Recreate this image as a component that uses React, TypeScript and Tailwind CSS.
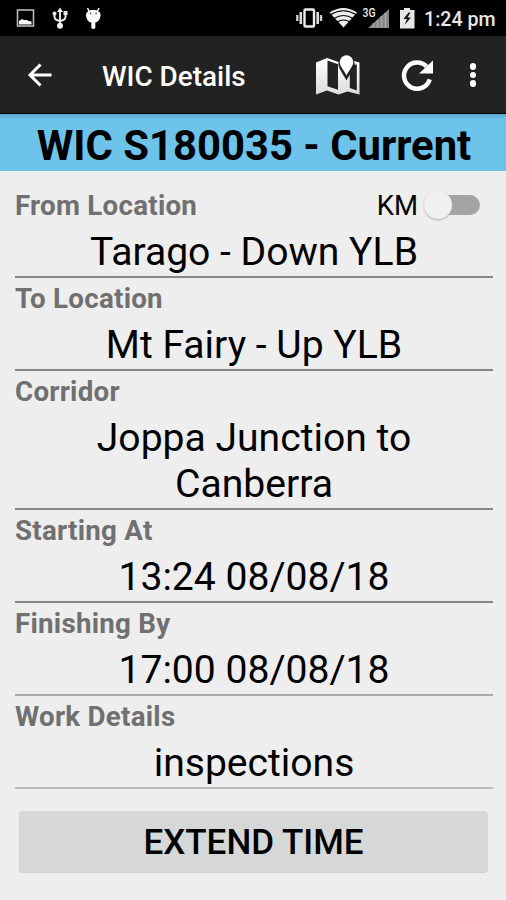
import React from "react";

function StatusBar() {
  return (
    <header className="flex h-9 shrink-0 items-center justify-between bg-black text-[#e8e8e8]">
      <svg width="110" height="36" viewBox="0 0 110 36" fill="none">
        <rect x="17.5" y="10" width="16" height="16" stroke="#b8b8b8" strokeWidth="1.6" />
        <path d="M19 24.500v-3.500l3-2 2 1 3 0 1.500 1 3 .5v3z" fill="#fff" />
        <path d="M60 10v16M54.500 14v3q0 3 5.500 4M65.500 13v4q0 3-5.500 4" stroke="#eee" strokeWidth="1.900" />
        <path d="M57 12l3-4.500 3 4.500zM63.500 11h4v4h-4z" fill="#eee" />
        <circle cx="54.500" cy="13.500" r="2" fill="#eee" />
        <circle cx="60" cy="25.800" r="3" fill="#eee" />
        <path d="M87.500 8l2 4M99 8l-2 4" stroke="#fff" strokeWidth="1.500" />
        <path d="M86 15c0-3 3-5 7.300-5s7.300 2 7.300 5c0 4-3 7.500-5.300 7.500V28q-2 2-4 0v-5.500C89 22.500 86 19 86 15z" fill="#fff" />
        <path d="M90 13.500h1.200M95.500 13.500h1.200" stroke="#333" strokeWidth="1.500" />
      </svg>
      <div className="flex items-center">
        <svg width="124" height="36" viewBox="292 0 124 36" fill="none">
          <rect x="304.500" y="9.500" width="9.500" height="17" rx="1" stroke="#eee" strokeWidth="2.400" />
          <path d="M300.800 12v12M317.700 12v12" stroke="#ddd" strokeWidth="2.600" />
          <path d="M297.300 15v6M321 15v6" stroke="#ccc" strokeWidth="2.400" />
          <path d="M329.500 12.500Q343.500 3.500 357 12.500L343.500 27.500z" fill="#eee" />
          <path d="M330.500 14.500Q343.500 7 356 14.500M334 18.500Q343.500 12.500 353 18.500M337 22Q343.500 18 350 22" stroke="#000" strokeWidth="1.200" />
          <text x="362.500" y="16.500" fill="#eee" fontSize="12" fontWeight="500" fontFamily="Roboto, sans-serif" textLength="13" lengthAdjust="spacingAndGlyphs">3G</text>
          <path d="M368 28L389 9v19z" fill="#858585" />
          <path d="M373.500 23v5M377.500 20v8M381.500 16v12M385.500 13v15" stroke="#a7a7a7" strokeWidth="1.500" />
          <path d="M404 8h6v2h4.500v18.500h-14.500v-18.500h4z" fill="#e8e8e8" />
          <path d="M408.500 12.500l-5 6.500h3.500l-2.500 6 6.500-7.500h-3.500l3-5z" fill="#111" />
        </svg>
        <span className="ml-[8px] mt-[3px] w-[82px] whitespace-nowrap text-[19.600px] leading-6 font-medium">1:24 pm</span>
      </div>
    </header>
  );
}

function AppBar() {
  return (
    <nav className="flex h-[78px] shrink-0 items-center border-b border-black bg-[#222] text-white">
      <button aria-label="Back" className="ml-6 mt-[2px] h-8 w-8">
        <svg width="32" height="32" viewBox="0 0 32 32" fill="none" stroke="#fff" strokeWidth="3">
          <path d="M27.500 15H6M16.500 4.500L6 15l10.500 10.500" />
        </svg>
      </button>
      <h1 className="ml-[46px] mt-[5px] w-[200px] whitespace-nowrap text-[27.900px] leading-8 font-medium">WIC Details</h1>
      <button aria-label="Map" className="ml-[10px] h-[44px] w-[50px]">
        <svg width="50" height="44" viewBox="312 53 50 44">
          <defs>
            <linearGradient id="paper" x1="0" y1="0" x2="0" y2="1">
              <stop stopColor="#fff" />
              <stop offset="1" stopColor="#ddd" />
            </linearGradient>
          </defs>
          <path d="M316 62.500l11-4.500 11.500 4 9-3 12 3.500v32l-12-3-9 3-11.500-4-11 4z" fill="url(#paper)" />
          <path d="M327.500 60.500l10.500 3.700v25.500l-10.500-3.500z" fill="#222" />
          <path d="M349.800 65l7 -.5v26l-7-2.500z" fill="#222" />
          <path d="M346.500 80.500C343 74 338.300 68 338.300 63.500a8.200 8.200 0 0 1 16.400 0C354.700 68 350 74 346.500 80.500z" fill="#222" />
          <path d="M346.500 75.500C343.500 69.500 339.700 66 339.700 62a6.800 6.800 0 0 1 13.600 0C353.300 66 349.500 69.500 346.500 75.500z" fill="#fff" />
        </svg>
      </button>
      <button aria-label="Refresh" className="ml-[36px] h-[36px] w-[36px]">
        <svg width="36" height="36" viewBox="398 57 36 36" fill="none">
          <path d="M429.700 79.300A13.100 13.100 0 1 1 426.500 66.500" stroke="#fff" strokeWidth="4.500" />
          <path d="M433 60.500v13h-14z" fill="#fff" />
        </svg>
      </button>
      <button aria-label="More options" className="ml-[32px] mt-[1px] flex w-[14px] flex-col items-center gap-[2px]">
        <span className="size-[6.500px] rounded-full bg-white" />
        <span className="size-[6.500px] rounded-full bg-white" />
        <span className="size-[6.500px] rounded-full bg-white" />
      </button>
    </nav>
  );
}

const fields = [
  { label: "From Location", value: "Tarago - Down YLB", line: "border-[#858585]", toggle: true },
  { label: "To Location", value: "Mt Fairy - Up YLB", line: "border-[#858585]" },
  { label: "Corridor", value: "Joppa Junction to Canberra", line: "border-[#858585]" },
  { label: "Starting At", value: "13:24 08/08/18", line: "border-[#858585]" },
  { label: "Finishing By", value: "17:00 08/08/18", line: "border-[#aaa]" },
  { label: "Work Details", value: "inspections", line: "border-[#bbb]" },
];

export default function App() {
  return (
    <div className="flex h-[900px] w-[506px] flex-col overflow-hidden bg-[#eee] font-[Roboto,sans-serif]">
      <StatusBar />
      <AppBar />
      <div className="flex h-[57px] shrink-0 items-center justify-center bg-[#6ec3eb] bg-linear-to-b from-[#5ba8cf] to-[#6ec3eb] to-10%">
        <h2 className="mt-[7px] ml-[2px] whitespace-nowrap text-[41.800px] leading-[50px] font-bold">WIC S180035 - Current</h2>
      </div>
      <main className="mx-[15px] mt-[14px] w-[478px]">
        {fields.map((f) => (
          <section key={f.label} className={`border-b-2 ${f.line}`}>
            <div className="flex h-[43px] items-center justify-between">
              <span className="-mt-px whitespace-nowrap text-[27.700px] tracking-[0.26px] leading-8 font-bold text-[#707070]">{f.label}</span>
              {f.toggle && (
                <div className="-mt-px mr-[13px] flex items-center">
                  <span className="mr-[6px] text-[27.500px] leading-8">KM</span>
                  <span className="-mt-[2px] flex h-[20px] w-[56px] items-center rounded-full bg-linear-to-r from-transparent from-30% to-[#a4a4a4] to-30%">
                    <span className="size-[28px] shrink-0 rounded-full bg-[#f0f0f0] shadow-[0_1px_2px_#aaa]" />
                  </span>
                </div>
              )}
            </div>
            <p className="mx-auto max-w-[400px] pt-[1px] pb-[1px] text-center text-[39.100px] leading-[46px]">{f.value}</p>
          </section>
        ))}
      </main>
      <button className="mx-[19px] mt-[22px] h-[61px] w-[469px] rounded-[4px] bg-[#d6d8d7] pt-[2px] text-[35px] leading-[59px] font-medium shadow-[0_1px_1px_#ccc]">EXTEND TIME</button>
    </div>
  );
}
